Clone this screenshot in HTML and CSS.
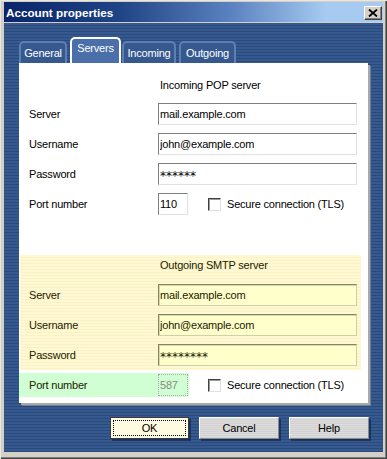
FILE: index.html
```html
<!DOCTYPE html>
<html>
<head>
<meta charset="utf-8">
<link rel="stylesheet" href="styles.css">
</head>
<body>
<div class="window">
  <div class="titlebar">
    <span class="title">Account properties</span>
    <span class="close"><svg width="10" height="8" viewBox="0 0 10 8"><path d="M1 0.5 L9 7.5 M9 0.5 L1 7.5" stroke="#000" stroke-width="1.8" fill="none"/></svg></span>
  </div>
  <div class="body">
    <div class="tabs">
      <div class="tab tab-general">General</div>
      <div class="tab tab-active tab-servers">Servers</div>
      <div class="tab tab-incoming">Incoming</div>
      <div class="tab tab-outgoing">Outgoing</div>
    </div>
    <div class="panel">
      <div class="section">
        <div class="header">Incoming POP server</div>
        <span class="label">Server</span>
        <input class="field" value="mail.example.com" readonly>
        <span class="label">Username</span>
        <input class="field" value="john@example.com" readonly>
        <span class="label">Password</span>
        <input class="field field-pass" value="******" readonly>
        <span class="label">Port number</span>
        <div class="port-cell">
          <input class="field port" value="110" readonly>
          <span class="check"></span>
          <span class="check-text">Secure connection (TLS)</span>
        </div>
      </div>
      <div class="section section-yellow">
        <div class="header header-yellow">Outgoing SMTP server</div>
        <span class="label">Server</span>
        <input class="field field-yellow" value="mail.example.com" readonly>
        <span class="label">Username</span>
        <input class="field field-yellow" value="john@example.com" readonly>
        <span class="label">Password</span>
        <input class="field field-yellow field-pass" value="********" readonly>
      </div>
      <div class="port-row">
        <div class="green">
          <span class="label green-label">Port number</span>
          <input class="field port port-disabled" value="587" readonly>
        </div>
        <span class="check check-green"></span>
        <span class="check-text">Secure connection (TLS)</span>
      </div>
    </div>
    <div class="buttons">
      <button class="btn btn-ok"><span class="focus">OK</span></button>
      <button class="btn btn-cancel">Cancel</button>
      <button class="btn btn-help">Help</button>
    </div>
  </div>
</div>
</body>
</html>
```
FILE: styles.css
```css
html, body {
  margin: 0;
  padding: 0;
}
body {
  font-family: "Liberation Sans", Arial, sans-serif;
  font-size: 11px;
  letter-spacing: -0.2px;
  color: #000;
}
.window {
  width: 387px;
  height: 459px;
  box-sizing: border-box;
  padding: 2px 4px 7px 4px;
  background: #d4d0c8;
  box-shadow: inset 1px 1px 0 #e8e6e0, inset -1px -1px 0 #404040, inset -2px -2px 0 #808080;
  display: flex;
  flex-direction: column;
}
.titlebar {
  height: 20px;
  flex: 0 0 20px;
  margin-bottom: 1px;
  background: linear-gradient(90deg, #0a246a 0%, #1e4384 30%, #5b82c0 60%, #a6caf0 85%, #a6caf0 100%);
  display: flex;
  align-items: center;
  justify-content: space-between;
  padding: 0 1px 0 2px;
}
.title {
  color: #fff;
  font-weight: bold;
  font-size: 11.7px;
  letter-spacing: 0;
  padding-top: 1px;
}
.close {
  width: 18px;
  height: 14px;
  box-sizing: border-box;
  background: #d4d0c8;
  border: 1px solid;
  border-color: #ffffff #404040 #404040 #ffffff;
  box-shadow: inset -1px -1px 0 #808080;
  display: flex;
  align-items: center;
  justify-content: center;
  margin-top: 2px;
}
.close svg {
  display: block;
}
.body {
  flex: 1;
  background: repeating-linear-gradient(180deg, #365a8f 0px, #365a8f 2px, #2a4a7c 2px, #2a4a7c 3px);
  padding: 14px 14px 0 15px;
}
.tabs {
  display: flex;
  align-items: flex-end;
  height: 26px;
}
.tab {
  height: 22px;
  box-sizing: border-box;
  border: 2px solid #5d7fb3;
  border-bottom: none;
  border-radius: 5px 5px 0 0;
  background: #35598f;
  color: #fff;
  text-align: center;
  line-height: 16px;
  padding-top: 2px;
}
.tab-general { width: 48px; }
.tab-servers { width: 51px; margin-left: 3px; }
.tab-incoming { width: 54px; margin-left: 1px; }
.tab-outgoing { width: 57px; margin-left: 3px; }
.tab-active {
  height: 26px;
  border-color: #ffffff;
  background: #4b6fa8;
  padding-top: 1px;
}
.panel {
  width: 349px;
  height: 340px;
  box-sizing: border-box;
  background: #ffffff;
  box-shadow: 2px 2px 0 #a9a9a9, 3px 3px 0 #6f7f99;
  padding: 12px 0 6px 0;
}
.section {
  display: grid;
  grid-template-columns: 129px 199px;
  grid-template-rows: 20px;
  grid-auto-rows: 22px;
  row-gap: 8px;
  align-items: center;
  padding-left: 10px;
}
.header {
  grid-column: 2;
  height: 20px;
  line-height: 20px;
  padding-left: 2px;
  align-self: start;
}
.label {
  line-height: 22px;
}
.field {
  font: inherit;
  letter-spacing: inherit;
  color: #000;
  height: 22px;
  width: 199px;
  box-sizing: border-box;
  margin: 0;
  padding: 0 1px;
  border: 1px solid;
  border-color: #7f7f7f #e2e2e2 #e2e2e2 #7f7f7f;
  background: #ffffff;
  outline: none;
}
.field-pass {
  font-family: "DejaVu Sans", sans-serif;
  font-size: 12px;
  letter-spacing: 0;
  padding-top: 3px;
}
.port-cell {
  display: flex;
  align-items: center;
}
.port {
  width: 30px;
}
.check {
  width: 13px;
  height: 13px;
  box-sizing: border-box;
  border: 1px solid;
  border-color: #404040 #e0e0e0 #e0e0e0 #404040;
  box-shadow: inset 1px 1px 0 #9a9a9a;
  background: #fff;
  margin-left: 20px;
  flex: 0 0 13px;
}
.check-text {
  margin-left: 6px;
  line-height: 22px;
}
.section-yellow {
  margin: 40px 0 0 1px;
  width: 341px;
  box-sizing: border-box;
  padding: 0 4px 4px 9px;
  background: repeating-linear-gradient(180deg, #fff8d4 0px, #fff8d4 2px, #fcf1c0 2px, #fcf1c0 3px);
  grid-template-rows: 21px;
  color: #222200;
}
.header-yellow {
  color: #222200;
}
.field-yellow {
  background: #ffffcc;
  border-color: #86865a #cfcfa8 #cfcfa8 #86865a;
  box-shadow: inset 1px 1px 0 #d6d6b2;
  color: #222200;
}
.port-row {
  margin-top: 3px;
  display: flex;
  align-items: center;
  height: 24px;
}
.green {
  width: 170px;
  height: 24px;
  box-sizing: border-box;
  padding: 0 1px 0 10px;
  background: #cfffd2;
  display: flex;
  align-items: center;
}
.green-label {
  width: 129px;
  flex: 0 0 129px;
  color: #222200;
}
.port-disabled {
  background: transparent;
  border: 1px dotted #a8a8a8;
  color: #8a8a8a;
}
.check-green {
  margin-left: 19px;
}
.buttons {
  display: flex;
  justify-content: flex-end;
  gap: 10px;
  margin-top: 14px;
}
.btn {
  height: 22px;
  width: 80px;
  box-sizing: border-box;
  margin: 0;
  padding: 0;
  font: inherit;
  letter-spacing: inherit;
  color: #000;
  background: repeating-linear-gradient(180deg, #dcdcdc 0px, #dcdcdc 1px, #d2d2d2 1px, #d2d2d2 2px);
  border: 1px solid;
  border-color: #ffffff #8a8a8a #8a8a8a #ffffff;
  box-shadow: 2px 2px 0 rgba(10, 25, 60, 0.55);
  text-align: center;
}
.btn-ok {
  width: 79px;
  background: #fffbe0;
  border: 1px solid #3a3a3a;
  padding: 2px;
}
.focus {
  display: block;
  height: 16px;
  box-sizing: border-box;
  border: 1px dotted #000;
  line-height: 14px;
}
```
